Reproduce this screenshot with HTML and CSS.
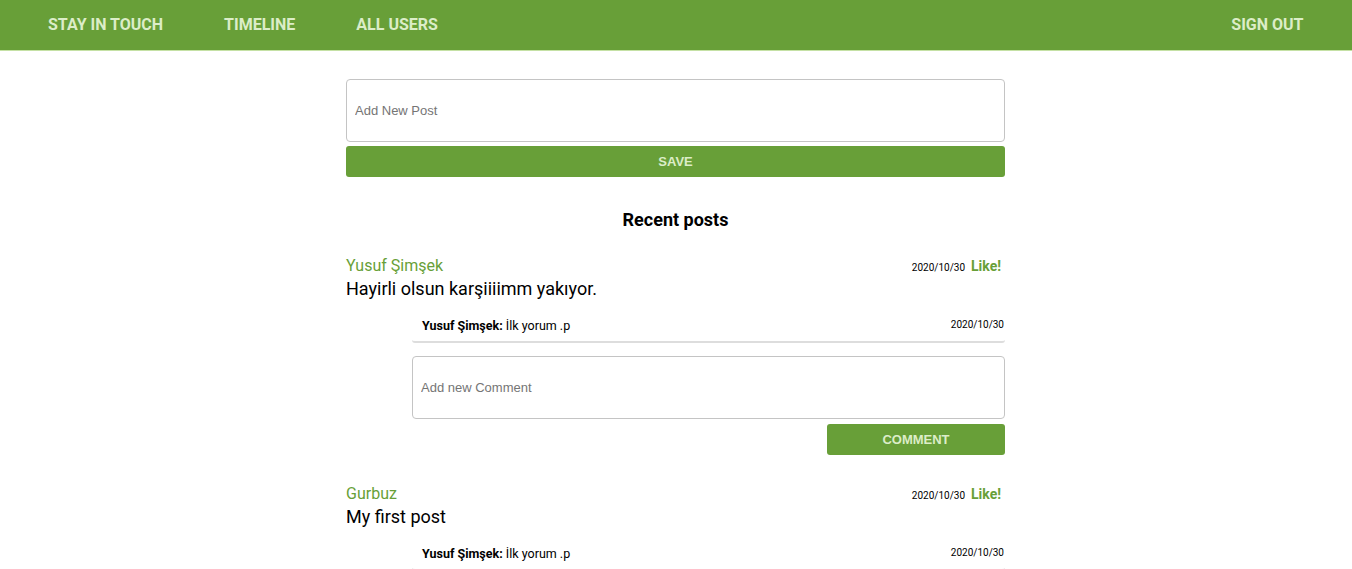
FILE: index.html
```html
<!DOCTYPE html>
<html>
<head>
<meta charset="utf-8">
<link rel="stylesheet" href="styles.css">
</head>
<body>
<nav class="nav">
  <div class="nav-left">
    <a class="nav-link">STAY IN TOUCH</a>
    <a class="nav-link">TIMELINE</a>
    <a class="nav-link">ALL USERS</a>
  </div>
  <a class="nav-link">SIGN OUT</a>
</nav>
<main class="main">
  <form class="new-post">
    <input class="field field-post" placeholder="Add New Post">
    <button class="btn btn-full" type="button">SAVE</button>
  </form>
  <h3 class="title">Recent posts</h3>

  <article class="post">
    <div class="post-head">
      <span class="author">Yusuf Şimşek</span>
      <span class="meta"><span class="date">2020/10/30</span><span class="like">Like!</span></span>
    </div>
    <p class="body">Hayirli olsun karşiiiimm yakıyor.</p>
    <div class="comments">
      <div class="comment">
        <span class="ctext"><b>Yusuf Şimşek:</b> İlk yorum .p</span>
        <span class="date cdate">2020/10/30</span>
      </div>
      <input class="field field-comment" placeholder="Add new Comment">
      <div class="comment-actions">
        <button class="btn btn-comment" type="button">COMMENT</button>
      </div>
    </div>
  </article>

  <article class="post">
    <div class="post-head">
      <span class="author">Gurbuz</span>
      <span class="meta"><span class="date">2020/10/30</span><span class="like">Like!</span></span>
    </div>
    <p class="body">My first post</p>
    <div class="comments">
      <div class="comment">
        <span class="ctext"><b>Yusuf Şimşek:</b> İlk yorum .p</span>
        <span class="date cdate">2020/10/30</span>
      </div>
    </div>
  </article>
</main>
</body>
</html>
```
FILE: styles.css
```css
* { box-sizing: border-box; }
body {
  margin: 0;
  font-family: Roboto, "Liberation Sans", sans-serif;
  color: #000;
  background: #fff;
}
.nav {
  height: 51px;
  background: #689f38;
  border-bottom: 1px solid #c5e1a5;
  display: flex;
  align-items: center;
  justify-content: space-between;
  padding: 0 18px 1px 17.5px;
}
.nav-left { display: flex; }
.nav-link {
  color: #dcedc8;
  font-weight: 700;
  font-size: 16px;
  padding: 0 30.5px;
  cursor: pointer;
}
.main {
  width: 660px;
  margin: 0 auto;
  padding: 28px 1px 0 0;
}
.new-post { display: flex; flex-direction: column; gap: 4px; }
.field {
  display: block;
  width: 100%;
  height: 63px;
  border: 1px solid #c4c4c4;
  border-radius: 4px;
  padding: 0 8px;
  font-family: "Liberation Sans", Arial, sans-serif;
  font-size: 13px;
  color: #333;
  background: #fff;
}
.field::placeholder { color: #757575; }
.btn {
  height: 31px;
  border: 0;
  border-radius: 3px;
  background: #689f38;
  color: #dcedc8;
  font-family: "Liberation Sans", Arial, sans-serif;
  font-weight: 700;
  font-size: 13px;
}
.btn-full { width: 100%; }
.title {
  text-align: center;
  font-size: 18px;
  font-weight: 700;
  margin: 32px 0 26px;
}
.post { margin-bottom: 29px; }
.post-head {
  display: flex;
  justify-content: space-between;
  align-items: baseline;
  height: 20px;
}
.author { color: #689f38; font-size: 16px; }
.meta { display: flex; align-items: baseline; gap: 6px; padding-right: 4px; }
.date { font-size: 10px; }
.like { color: #689f38; font-weight: 700; font-size: 14px; }
.body { margin: 1px 0 0; font-size: 18px; line-height: 24px; }
.comments { margin-left: 66px; padding-top: 17px; }
.comment {
  display: flex;
  justify-content: space-between;
  align-items: baseline;
  padding: 0 1px 8px 10px;
  border-bottom: 2px solid #ddd;
  border-radius: 0 0 3px 3px;
  font-size: 12.5px;
}
.cdate { position: relative; top: -2px; }
.field-comment { margin-top: 13px; }
.comment-actions { display: flex; justify-content: flex-end; margin-top: 5px; }
.btn-comment { width: 178px; }
```
